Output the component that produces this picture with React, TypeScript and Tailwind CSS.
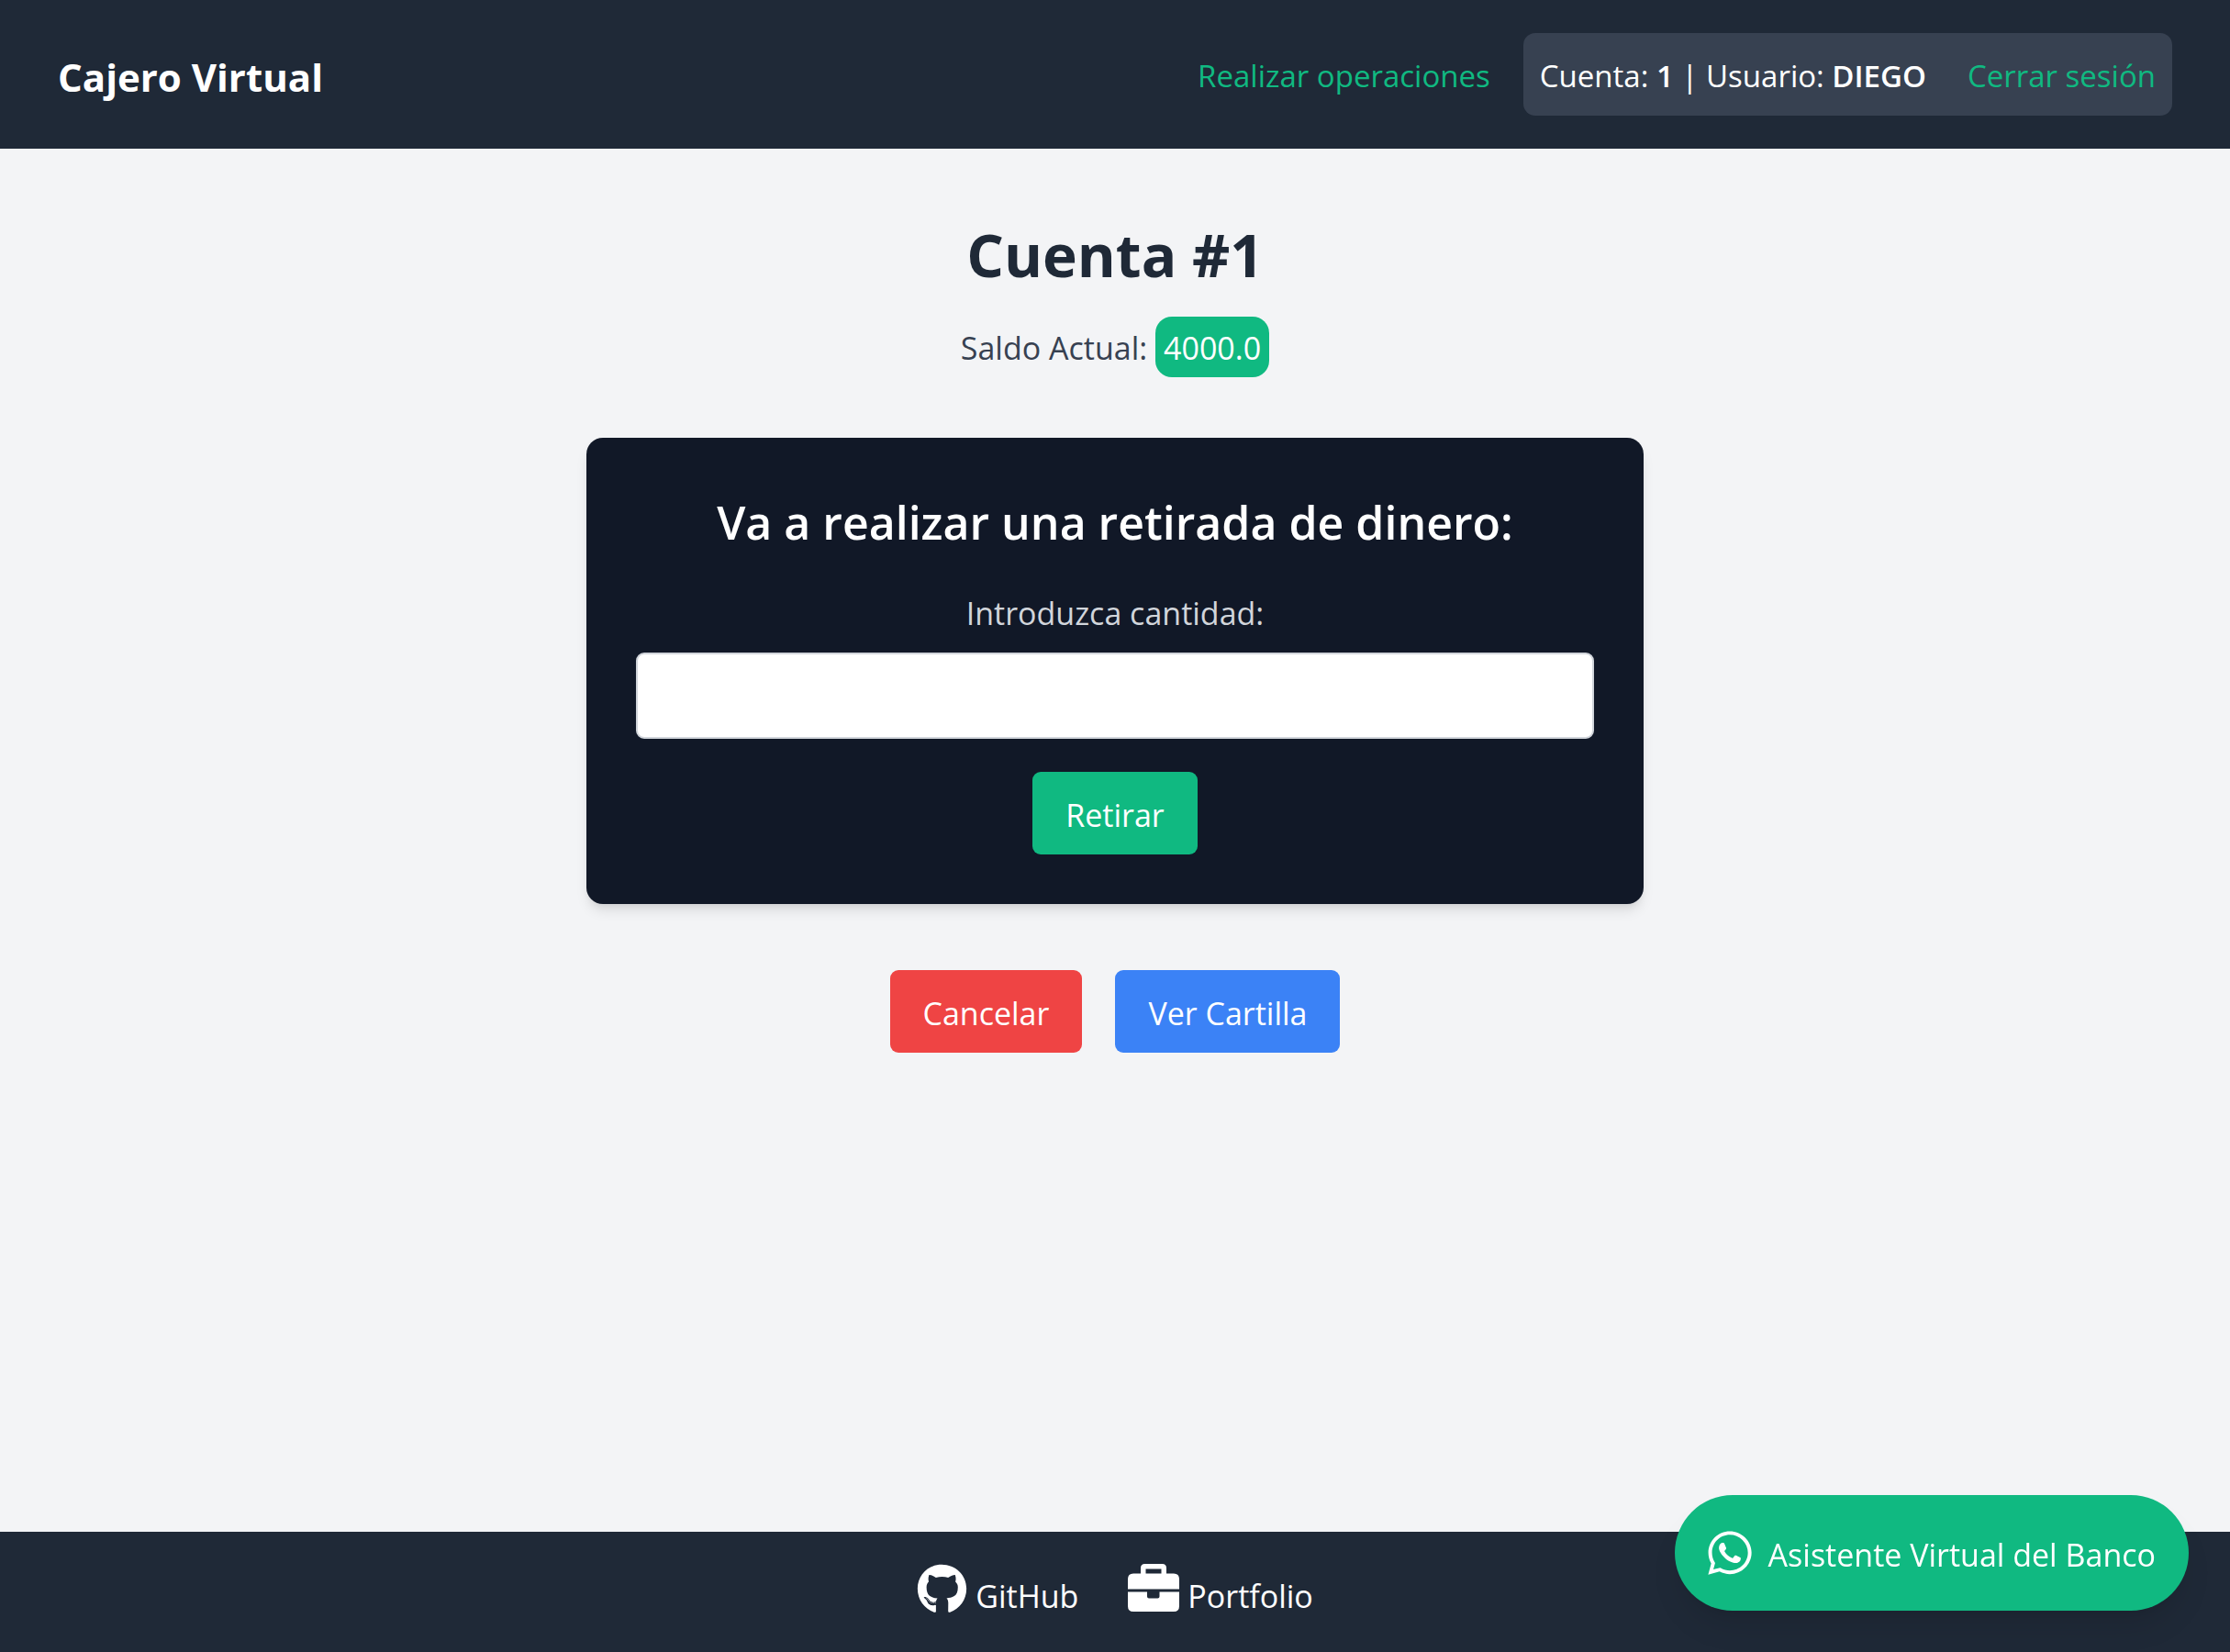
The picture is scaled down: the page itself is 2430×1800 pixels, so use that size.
import { FaGithub, FaWhatsapp } from "react-icons/fa";

function BriefcaseIcon() {
  return (
    <svg viewBox="0 0 56 52" className="h-[52px] w-14 shrink-0" fill="currentColor" aria-hidden="true">
      <path
        fillRule="evenodd"
        d="M14 10.5V4.5q0-4.5 4.5-4.5h19q4.5 0 4.5 4.5v6h8q6 0 6 6v11H0v-11q0-6 6-6zM19.5 5.5v5h17v-5z"
      />
      <path d="M0 30.5h21v5q0 2 2 2h9.500q2 0 2-2v-5H56V46q0 6-6 6H6q-6 0-6-6z" />
    </svg>
  );
}

export default function App() {
  return (
    <div className="flex min-h-screen flex-col bg-[#f3f4f6] font-['Open_Sans','Noto_Sans',sans-serif] text-[34px] leading-[54px]">
      <header className="flex items-center justify-between bg-[#1f2937] px-[63px] py-9 text-white">
        <a href="#" className="pt-1 text-[42px] leading-[63px] font-bold">Cajero Virtual</a>
        <nav className="flex items-center gap-9 text-[33px]">
          <a href="#operaciones" className="pt-1 text-[#10b981]">Realizar operaciones</a>
          <div className="flex items-center gap-[45px] rounded-[13px] bg-[#374151] px-[18px] pt-5 pb-4">
            <span>Cuenta: <strong className="font-semibold">1</strong> | Usuario: <strong className="font-semibold">DIEGO</strong></span>
            <a href="#salir" className="text-[#10b981]">Cerrar sesión</a>
          </div>
        </nav>
      </header>
      <main className="flex flex-1 flex-col items-center pt-[75px]">
        <h1 className="text-[64px] leading-[81px] font-bold text-[#1f2937]">Cuenta #1</h1>
        <p className="mt-[27px] text-[#374151]">
          Saldo Actual: <span className="inline-block rounded-[18px] bg-[#10b981] px-[9px] pt-[7px] pb-[5px] text-white">4000.0</span>
        </p>
        <form className="mt-[66px] flex w-full max-w-[1152px] flex-col items-center rounded-[18px] bg-[#111827] px-[54px] pt-14 pb-[54px] shadow-[0_9px_14px_-2px_rgb(0_0_0/0.1),0_5px_9px_-5px_rgb(0_0_0/0.1)]" onSubmit={(e) => e.preventDefault()}>
          <h2 className="text-[50px] leading-[72px] font-semibold text-white">Va a realizar una retirada de dinero:</h2>
          <label htmlFor="cantidad" className="mt-9 text-[#d1d5db]">Introduzca cantidad:</label>
          <input id="cantidad" type="text" className="mt-4 h-[94px] w-full rounded-[9px] border-2 border-[#d1d5db] bg-white px-[18px] text-[#111827]" />
          <button type="submit" className="mt-9 rounded-[9px] bg-[#10b981] px-9 pt-5 pb-4 text-white">Retirar</button>
        </form>
        <div className="mt-[72px] flex gap-9 text-white">
          <button type="button" className="rounded-[9px] bg-[#ef4444] px-9 pt-5 pb-4">Cancelar</button>
          <button type="button" className="rounded-[9px] bg-[#3b82f6] px-9 pt-5 pb-4">Ver Cartilla</button>
        </div>
      </main>
      <footer className="flex justify-center gap-[54px] bg-[#1f2937] pt-[35px] pb-[34px] text-white">
        <a href="#github" className="flex gap-[9px]">
          <FaGithub className="size-[55px]" />
          <span className="pt-2">GitHub</span>
        </a>
        <a href="#portfolio" className="flex gap-[9px]">
          <BriefcaseIcon />
          <span className="pt-2">Portfolio</span>
        </a>
      </footer>
      <button type="button" className="fixed right-[45px] bottom-[45px] flex items-center gap-[18px] rounded-full bg-[#10b981] p-9 text-white shadow-[0_22px_34px_-7px_rgb(0_0_0/0.1),0_9px_14px_-9px_rgb(0_0_0/0.1)]">
        <FaWhatsapp className="h-[54px] w-12" />
        <span className="-my-1 pt-1">Asistente Virtual del Banco</span>
      </button>
    </div>
  );
}
